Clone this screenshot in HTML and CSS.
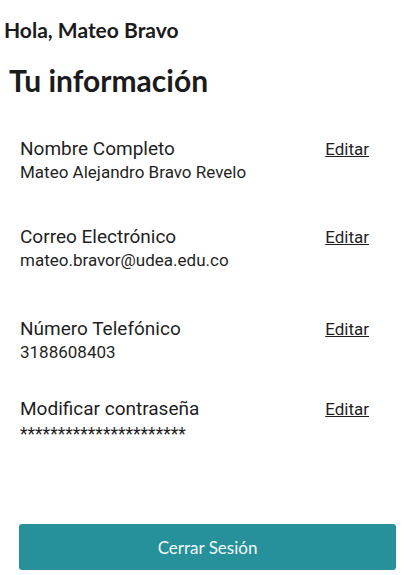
FILE: index.html
```html
<!DOCTYPE html>
<html lang="es">
<head>
<meta charset="utf-8">
<link rel="stylesheet" href="styles.css">
</head>
<body>
<div class="page">
  <h1 class="greeting">Hola, Mateo Bravo</h1>
  <h2 class="title">Tu información</h2>
  <div class="list">
    <div class="row">
      <div class="info">
        <div class="label">Nombre Completo</div>
        <div class="value">Mateo Alejandro Bravo Revelo</div>
      </div>
      <a class="edit" href="#">Editar</a>
    </div>
    <div class="row">
      <div class="info">
        <div class="label">Correo Electrónico</div>
        <div class="value">mateo.bravor@udea.edu.co</div>
      </div>
      <a class="edit" href="#">Editar</a>
    </div>
    <div class="row row-wide">
      <div class="info">
        <div class="label">Número Telefónico</div>
        <div class="value">3188608403</div>
      </div>
      <a class="edit" href="#">Editar</a>
    </div>
    <div class="row row-tight">
      <div class="info">
        <div class="label">Modificar contraseña</div>
        <div class="value pw">**********************</div>
      </div>
      <a class="edit" href="#">Editar</a>
    </div>
  </div>
  <button class="logout">Cerrar Sesión</button>
</div>
</body>
</html>
```
FILE: styles.css
```css
html, body {
  margin: 0;
  padding: 0;
  background: #fff;
}
.page {
  width: 407px;
  height: 575px;
  display: flex;
  flex-direction: column;
  color: #1b1b1b;
}
.greeting {
  font-family: Lato, sans-serif;
  font-weight: 700;
  font-size: 21px;
  margin: 18px 0 0 4px;
  line-height: 24px;
}
.title {
  font-family: Lato, sans-serif;
  font-weight: 700;
  font-size: 30px;
  margin: 20px 0 0 9px;
  line-height: 36px;
}
.list {
  display: flex;
  flex-direction: column;
  margin: 40px 0 0 20px;
  padding-right: 38px;
}
.row {
  display: flex;
  justify-content: space-between;
  align-items: baseline;
  font-family: Roboto, sans-serif;
}
.row + .row {
  margin-top: 44px;
}
.row.row-wide {
  margin-top: 48px;
}
.row.row-tight {
  margin-top: 36px;
}
.label {
  font-size: 19px;
  line-height: 22px;
  color: #1f1f1f;
}
.value {
  font-size: 17px;
  line-height: 20px;
  margin-top: 2px;
  color: #1f1f1f;
}
.value.pw {
  font-size: 17.5px;
  margin-top: 4px;
}
.edit {
  font-size: 17px;
  color: #1f1f1f;
  text-decoration: underline;
}
.logout {
  margin: auto 11px 5px 19px;
  height: 46px;
  background: #26919a;
  border: none;
  border-radius: 3px;
  color: #f4fafa;
  font-family: Lato, sans-serif;
  font-size: 17px;
}
```
